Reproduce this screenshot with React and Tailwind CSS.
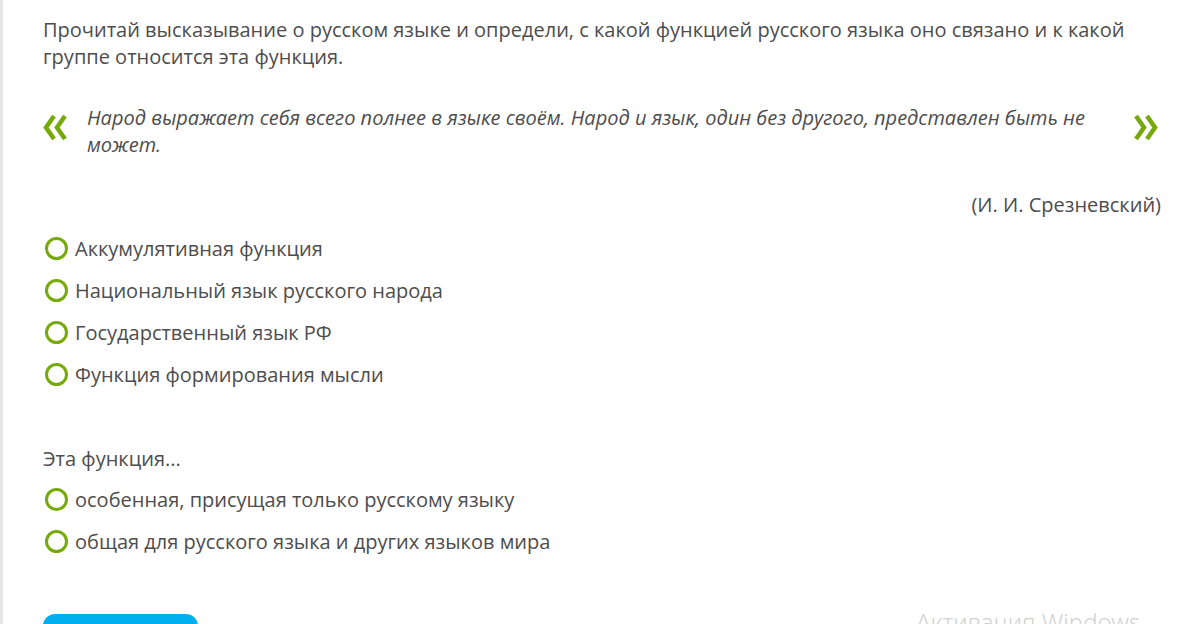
import React from 'react';

const options1 = [
  'Аккумулятивная функция',
  'Национальный язык русского народа',
  'Государственный язык РФ',
  'Функция формирования мысли',
];

const options2 = [
  'особенная, присущая только русскому языку',
  'общая для русского языка и других языков мира',
];

const Option = ({ label }) => (
  <label className="flex items-center gap-[7px] h-[42px] cursor-pointer">
    <span className="w-[23px] h-[23px] ml-[2px] rounded-full border-[3px] border-[#76a90a] shrink-0" />
    <span>{label}</span>
  </label>
);

// кавычки-ёлочки, dir: left / right
const Quote = ({ dir }) => (
  <svg width="24" height="27" viewBox="0 0 24 27" className="shrink-0">
    <g fill="none" stroke="#76a90a" strokeWidth="4.5" strokeLinejoin="miter">
      {dir === 'left' ? (
        <>
          <polyline points="11,2 3,13.5 11,25" />
          <polyline points="22,2 14,13.5 22,25" />
        </>
      ) : (
        <>
          <polyline points="2,2 10,13.5 2,25" />
          <polyline points="13,2 21,13.5 13,25" />
        </>
      )}
    </g>
  </svg>
);

export default function App() {
  return (
    <div
      className="relative w-[1193px] h-[624px] overflow-hidden bg-white text-[#4d4d4d] border-l-[3px] border-[#e6e6e6]"
      style={{ fontFamily: '"Open Sans", "Liberation Sans", sans-serif' }}
    >
      <div className="pl-[40px] pr-[32px] pt-[16px] text-[20px] leading-[27px]">
        {/* Задание */}
        <p>
          Прочитай высказывание о русском языке и определи, с какой функцией русского языка оно связано и к какой группе относится эта функция.
        </p>

        {/* Цитата */}
        <div className="flex items-start mt-[34px]">
          <div className="w-[44px] shrink-0 pt-[10px]">
            <Quote dir="left" />
          </div>
          <p className="flex-1 italic text-[20px] leading-[27px] pr-[10px]">
            Народ выражает себя всего полнее в языке своём. Народ и язык, один без другого, представлен быть не может.
          </p>
          <div className="w-[40px] shrink-0 pt-[10px] pr-[3px] flex justify-end">
            <Quote dir="right" />
          </div>
        </div>

        <p className="text-right mt-[33px]">(И. И. Срезневский)</p>

        <div className="mt-[9px]">
          {options1.map((o) => (
            <Option key={o} label={o} />
          ))}
        </div>

        <p className="mt-[50px]">Эта функция...</p>

        <div className="mt-[6px]">
          {options2.map((o) => (
            <Option key={o} label={o} />
          ))}
        </div>

        <button className="mt-[52px] w-[155px] h-[44px] rounded-[12px] bg-[#00aeef] text-white" />
      </div>

      {/* Водяной знак */}
      <div
        className="absolute left-[913px] top-[604px] text-[24px] text-[#d2d2d2] font-light"
        style={{ fontFamily: '"Noto Sans", "Open Sans", sans-serif' }}
      >
        Активация Windows
      </div>
    </div>
  );
}
